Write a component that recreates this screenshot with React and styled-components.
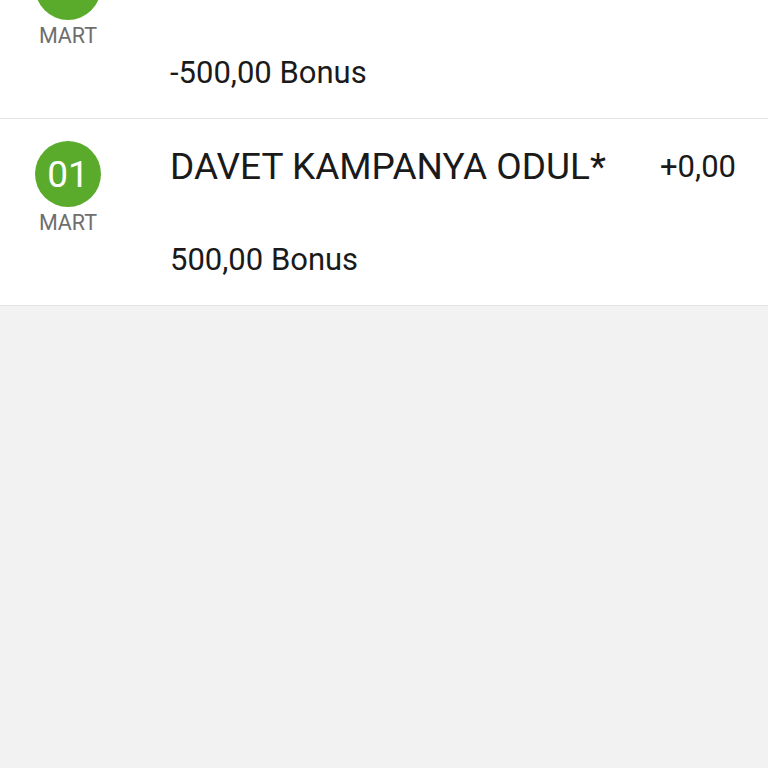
import React from "react";
import styled, { createGlobalStyle } from "styled-components";

const Global = createGlobalStyle`
  html, body { margin: 0; padding: 0; background: #f2f2f2; }
  body { font-family: Roboto, "Noto Sans", "Liberation Sans", sans-serif; overflow: hidden; }
`;

const Page = styled.div`
  width: 768px;
  height: 768px;
  background: #f2f2f2;
  overflow: hidden;
`;

const List = styled.div`
  margin-top: -68px;
  display: flex;
  flex-direction: column;
`;

const Row = styled.div`
  display: grid;
  grid-template-columns: 170px 1fr auto;
  height: 186px;
  background: #ffffff;
  border-bottom: 1px solid #e2e2e2;
  box-sizing: content-box;
`;

const DateCol = styled.div`
  display: flex;
  flex-direction: column;
  align-items: center;
  width: 136px;
  padding-top: 22px;
`;

const Circle = styled.div`
  width: 66px;
  height: 66px;
  border-radius: 50%;
  background: #5aab2b;
  color: #fff;
  display: flex;
  align-items: center;
  justify-content: center;
  font-size: 37px;
  line-height: 1;
`;

const Month = styled.div`
  margin-top: 4px;
  font-size: 21.5px;
  color: #6e6e6e;
  line-height: 24px;
`;

const Body = styled.div`
  display: flex;
  flex-direction: column;
  padding-top: 27px;
`;

const Title = styled.div`
  font-size: 37px;
  color: #1a1a1a;
  line-height: 42px;
  white-space: nowrap;
`;

const Amount = styled.div`
  margin-top: 56px;
  font-size: 31px;
  color: #1a1a1a;
  line-height: 32px;
`;

const Value = styled.div`
  padding-top: 29px;
  padding-right: 32px;
  font-size: 31px;
  color: #1a1a1a;
  line-height: 38px;
`;

const items = [
  { day: "01", month: "MART", title: "", amount: "-500,00 Bonus", value: "" },
  { day: "01", month: "MART", title: "DAVET KAMPANYA ODUL*", amount: "500,00 Bonus", value: "+0,00" },
];

export default function App() {
  return (
    <Page>
      <Global />
      <List>
        {items.map((it, i) => (
          <Row key={i}>
            <DateCol>
              <Circle>{it.day}</Circle>
              <Month>{it.month}</Month>
            </DateCol>
            <Body>
              <Title>{it.title || "\u00a0"}</Title>
              <Amount>{it.amount}</Amount>
            </Body>
            <Value>{it.value}</Value>
          </Row>
        ))}
      </List>
    </Page>
  );
}
